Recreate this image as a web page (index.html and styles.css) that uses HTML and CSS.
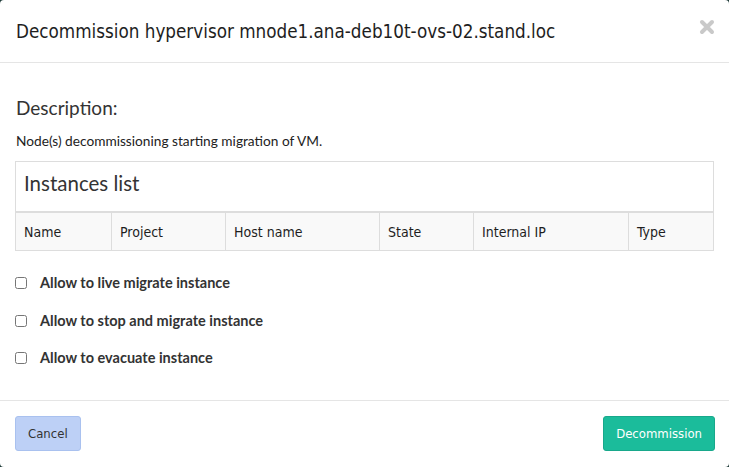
FILE: index.html
```html
<!DOCTYPE html>
<html lang="en">
<head>
    <meta charset="UTF-8">
    <meta name="viewport" content="width=device-width, initial-scale=1.0">
    <title>Decommission hypervisor</title>
    <link rel="stylesheet" href="styles.css">
</head>
<body>

<div class="modal">
    <div class="modal-header">
        <h3 class="modal-title">Decommission hypervisor mnode1.ana-deb10t-ovs-02.stand.loc</h3>
        <span class="close">
            <svg width="16" height="16" viewBox="0 0 16 16"><path d="M3 3L13 13M13 3L3 13" stroke="#c9c9c9" stroke-width="4" stroke-linecap="round"/></svg>
        </span>
    </div>
    <div class="modal-body">
        <h4>Description:</h4>
        <p class="help">Node(s) decommissioning starting migration of VM.</p>
        <div class="panel">
            <div class="panel-title">Instances list</div>
            <table class="instances">
                <thead>
                    <tr>
                        <th class="col-name">Name</th>
                        <th class="col-project">Project</th>
                        <th class="col-host">Host name</th>
                        <th class="col-state">State</th>
                        <th class="col-ip">Internal IP</th>
                        <th class="col-type">Type</th>
                    </tr>
                </thead>
            </table>
        </div>
        <div class="options">
            <label class="option"><input type="checkbox"> Allow to live migrate instance</label>
            <label class="option"><input type="checkbox"> Allow to stop and migrate instance</label>
            <label class="option"><input type="checkbox"> Allow to evacuate instance</label>
        </div>
    </div>
    <div class="modal-footer">
        <button type="button" class="btn btn-cancel">Cancel</button>
        <button type="button" class="btn btn-primary">Decommission</button>
    </div>
</div>

</body>
</html>
```

FILE: styles.css
```css
body {
    margin: 0;
    background: #1f3b38;
    font-family: Lato, "Liberation Sans", sans-serif;
    color: #333;
}
.modal {
    background: #fff;
    width: 729px;
    height: 467px;
    border-radius: 4px;
    box-sizing: border-box;
    display: flex;
    flex-direction: column;
}
.modal-header {
    height: 62px;
    border-bottom: 1px solid #e5e5e5;
    padding: 0 15px 0 16px;
    display: flex;
    align-items: center;
    justify-content: space-between;
}
.modal-title {
    margin: 0;
    font-family: "DejaVu Sans Condensed", sans-serif;
    font-weight: normal;
    font-size: 18.7px;
    color: #1e1e1e;
}
.close {
    display: flex;
    margin-top: -8px;
    margin-right: -1px;
}
.modal-body {
    flex: 1;
    padding: 34px 15px 0;
}
.modal-body h4 {
    margin: 0 0 14px 1px;
    font-size: 19px;
    line-height: 22px;
    font-weight: normal;
    color: #333;
}
.help {
    margin: 0 0 12px 1px;
    font-size: 13.7px;
    line-height: 16px;
    color: #222;
}
.panel {
    border: 1px solid #ddd;
}
.panel-title {
    height: 49px;
    padding: 0 8px;
    font-size: 20.5px;
    line-height: 42px;
    color: #333;
}
.instances {
    width: 100%;
    border-collapse: collapse;
    border-top: 2px solid #ddd;
}
.instances th {
    height: 37px;
    padding: 0 8px;
    text-align: left;
    background: #f9f9f9;
    border-left: 1px solid #ddd;
    font-family: "DejaVu Sans Condensed", sans-serif;
    font-weight: normal;
    font-size: 14px;
    color: #1e1e1e;
}
.instances th:first-child {
    border-left: none;
}
.col-name { width: 79px; }
.col-project { width: 97px; }
.col-host { width: 137px; }
.col-state { width: 77px; }
.col-ip { width: 138px; }
.options {
    margin-top: 22px;
    display: flex;
    flex-direction: column;
    gap: 17.5px;
}
.option {
    display: flex;
    align-items: center;
    gap: 13px;
    line-height: 20px;
    font-size: 14.5px;
    font-weight: bold;
    color: #333;
}
.option input {
    margin: 0;
    width: 12px;
    height: 12px;
}
.modal-footer {
    border-top: 1px solid #e5e5e5;
    padding: 15px 14px 16px 15px;
    display: flex;
    justify-content: space-between;
}
.btn {
    height: 35px;
    padding: 0 12px;
    border-radius: 3px;
    font-family: "DejaVu Sans Condensed", sans-serif;
    font-size: 13px;
    cursor: pointer;
}
.btn-cancel {
    background: #bdd0f6;
    border: 1px solid #a9c1ef;
    color: #333;
}
.btn-primary {
    background: #1bbc9b;
    border: 1px solid #18a88b;
    color: #fff;
}
```
